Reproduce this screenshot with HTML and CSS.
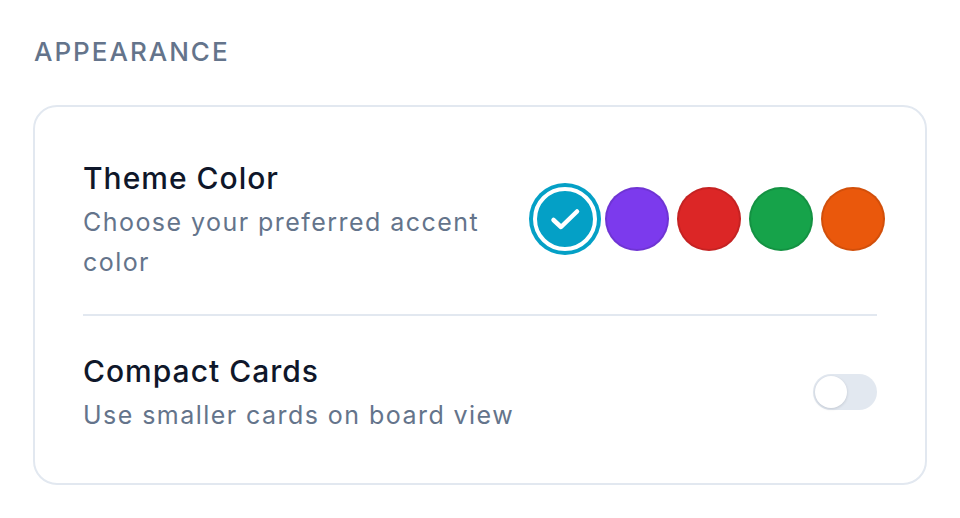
FILE: index.html
```html
<!DOCTYPE html>
<html lang="en">
<head>
<meta charset="utf-8">
<title>Appearance</title>
<link rel="stylesheet" href="styles.css">
</head>
<body>
<div class="page">
  <h2 class="section-title">Appearance</h2>
  <div class="card">
    <div class="row">
      <div class="text text-narrow">
        <div class="label">Theme Color</div>
        <div class="desc">Choose your preferred accent color</div>
      </div>
      <div class="swatches">
        <button class="swatch swatch-selected sw-cyan" aria-label="Cyan">
          <svg width="56" height="56" viewBox="0 0 56 56"><polyline points="16.5,29 24,36 40,20.5" fill="none" stroke="#fff" stroke-width="4.5" stroke-linecap="round" stroke-linejoin="round"/></svg>
        </button>
        <button class="swatch sw-violet" aria-label="Violet"></button>
        <button class="swatch sw-red" aria-label="Red"></button>
        <button class="swatch sw-green" aria-label="Green"></button>
        <button class="swatch sw-orange" aria-label="Orange"></button>
      </div>
    </div>
    <div class="divider"></div>
    <div class="row">
      <div class="text">
        <div class="label">Compact Cards</div>
        <div class="desc">Use smaller cards on board view</div>
      </div>
      <div class="toggle"><span class="knob"></span></div>
    </div>
  </div>
</div>
</body>
</html>
```
FILE: styles.css
```css
* { box-sizing: border-box; }
html, body { margin: 0; padding: 0; background: #ffffff; }
body { font-family: Inter, "Noto Sans", sans-serif; }
.page { padding: 28px 33px 0 33px; }
.section-title {
  margin: 0 0 29px 1px;
  font-size: 26px;
  line-height: 48px;
  font-weight: 500;
  letter-spacing: 2px;
  text-transform: uppercase;
  color: #64748b;
}
.card {
  border: 2px solid #e2e8f0;
  border-radius: 24px;
  padding: 48px;
  background: #fff;
}
.row {
  display: flex;
  align-items: center;
  justify-content: space-between;
  gap: 24px;
}
.text { flex: 1 1 auto; min-width: 0; }
.text-narrow { flex: 0 1 auto; max-width: 420px; }
.label {
  font-size: 30px;
  line-height: 47px;
  font-weight: 500;
  letter-spacing: 1px;
  color: #0f172a;
}
.desc {
  font-size: 25px;
  line-height: 40px;
  letter-spacing: 1.45px;
  color: #64748b;
}
.divider {
  height: 2px;
  background: #e2e8f0;
  margin: 32px 0;
}
.swatches {
  display: flex;
  gap: 8px;
  margin-right: -8px;
}
.swatch {
  width: 64px;
  height: 64px;
  border-radius: 50%;
  border: 2px solid rgba(0,0,0,0.1);
  padding: 0;
  display: flex;
  align-items: center;
  justify-content: center;
  flex: none;
}
.swatch-selected {
  border: 4px solid #fff;
  box-shadow: 0 0 0 4px #04a0c6;
}
.sw-cyan { background: #04a0c6; }
.sw-violet { background: #7c3aed; }
.sw-red { background: #dc2626; }
.sw-green { background: #16a34a; }
.sw-orange { background: #ea580c; }
.toggle {
  width: 64px;
  height: 36px;
  border-radius: 18px;
  background: #e2e8f0;
  padding: 2px;
  flex: none;
}
.knob {
  display: block;
  width: 32px;
  height: 32px;
  border-radius: 50%;
  background: #fff;
  box-shadow: 0 1px 3px rgba(15,23,42,0.15);
}
```
